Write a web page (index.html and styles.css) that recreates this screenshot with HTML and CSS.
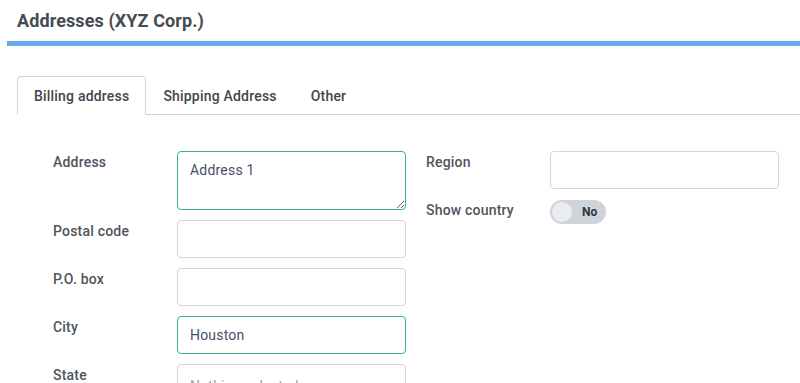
FILE: index.html
```html
<!DOCTYPE html>
<html lang="en">

<head>
    <meta charset="UTF-8">
    <meta name="viewport" content="width=device-width, initial-scale=1.0">
    <title>Addresses (XYZ Corp.)</title>
    <link rel="stylesheet" href="styles.css">
</head>

<body>
    <header class="pageHeader">
        <h1>Addresses (XYZ Corp.)</h1>
    </header>

    <ul class="tabs">
        <li class="tab active">Billing address</li>
        <li class="tab">Shipping Address</li>
        <li class="tab">Other</li>
    </ul>

    <form class="addressForm">
        <div class="formColumn">
            <div class="formRow">
                <label for="txtAddress">Address</label>
                <textarea id="txtAddress" class="valid">Address 1</textarea>
            </div>
            <div class="formRow">
                <label for="txtPostal">Postal code</label>
                <input type="text" id="txtPostal">
            </div>
            <div class="formRow">
                <label for="txtPoBox">P.O. box</label>
                <input type="text" id="txtPoBox">
            </div>
            <div class="formRow">
                <label for="txtCity">City</label>
                <input type="text" id="txtCity" class="valid" value="Houston">
            </div>
            <div class="formRow">
                <label>State</label>
                <div class="selectBox">
                    <span class="placeholder">Nothing selected</span>
                    <svg class="chevron" width="12" height="8" viewBox="0 0 12 8">
                        <path d="M1 1.5 L6 6.5 L11 1.5" fill="none" stroke="#4a4f57" stroke-width="1.6" />
                    </svg>
                </div>
            </div>
        </div>
        <div class="formColumn">
            <div class="formRow">
                <label for="txtRegion">Region</label>
                <input type="text" id="txtRegion">
            </div>
            <div class="formRow">
                <label>Show country</label>
                <div class="toggle">
                    <span class="knob"></span>
                    <span class="toggleText">No</span>
                </div>
            </div>
        </div>
    </form>
</body>

</html>
```

FILE: styles.css
```css
html,
body {
    overflow: hidden;
}

body {
    margin: 0px;
    padding: 0px;
    font-family: Roboto, "Open Sans", sans-serif;
    color: #4a4f57;
    background-color: #ffffff;
}

.pageHeader {
    margin-left: 7px;
    padding: 9px 10px 0px 10px;
    height: 32px;
    border-bottom: 5px solid #66aae8;
}

.pageHeader h1 {
    margin: 0px;
    font-size: 18px;
    font-weight: 700;
    line-height: 24px;
    letter-spacing: 0.1px;
    color: #454b52;
}

.tabs {
    list-style: none;
    display: flex;
    margin: 30px 0px 0px 17px;
    padding: 0px;
    border-bottom: 1px solid #cfd5dc;
}

.tab {
    padding: 9px 16px 8px 16px;
    font-size: 14px;
    font-weight: 500;
    line-height: 20px;
    letter-spacing: 0.2px;
    color: #3f4650;
    border: 1px solid transparent;
    border-radius: 4px 4px 0px 0px;
    margin-bottom: -1px;
}

.tab.active {
    border-color: #cfd5dc;
    border-bottom-color: #ffffff;
    background-color: #ffffff;
}

.addressForm {
    display: flex;
    gap: 20px;
    padding: 36px 21px 0px 53px;
}

.formColumn {
    width: 353px;
    display: flex;
    flex-direction: column;
    gap: 10px;
}

.formRow {
    display: flex;
    align-items: flex-start;
}

.formRow label {
    width: 124px;
    flex-shrink: 0;
    padding-top: 1px;
    font-size: 14px;
    font-weight: 500;
    line-height: 20px;
    letter-spacing: 0.2px;
    color: #4f555d;
}

input,
textarea,
.selectBox {
    box-sizing: border-box;
    width: 229px;
    height: 38px;
    margin: 0px;
    padding: 0px 12px;
    border: 1px solid #d3d6db;
    border-radius: 4px;
    font-family: Roboto, "Open Sans", sans-serif;
    font-size: 14px;
    letter-spacing: 0.2px;
    color: #4a4f66;
    background-color: #ffffff;
    outline: none;
}

textarea {
    height: 59px;
    padding-top: 8px;
    line-height: 20px;
    resize: vertical;
}

.valid {
    border-color: #3ab67d;
}

.selectBox {
    display: flex;
    align-items: center;
    justify-content: space-between;
    padding-top: 6px;
}

.placeholder {
    color: #9aa0a8;
}

.toggle {
    box-sizing: border-box;
    width: 56px;
    height: 24px;
    margin-top: 1px;
    padding: 2px;
    display: flex;
    align-items: center;
    gap: 10px;
    border-radius: 12px;
    background-color: #cfd4da;
}

.knob {
    width: 20px;
    height: 20px;
    border-radius: 50%;
    background-color: #ebebf0;
}

.toggleText {
    font-size: 12px;
    font-weight: 700;
    color: #2f3640;
}
```
